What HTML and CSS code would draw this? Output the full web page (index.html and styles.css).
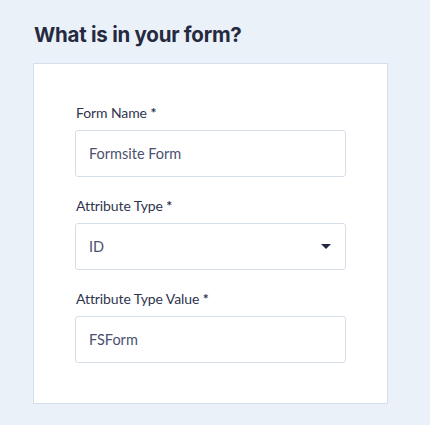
FILE: index.html
```html
<!DOCTYPE html>
<html lang="en">
<head>
<meta charset="utf-8">
<title>What is in your form?</title>
<link rel="stylesheet" href="styles.css">
</head>
<body>
<main class="page">
  <h1 class="title">What is in your form?</h1>
  <section class="card">
    <div class="field">
      <label class="label">Form Name <span class="req">*</span></label>
      <div class="input">Formsite Form</div>
    </div>
    <div class="field">
      <label class="label">Attribute Type <span class="req">*</span></label>
      <div class="input select">
        <span>ID</span>
        <svg class="caret" width="10" height="5" viewBox="0 0 10 5"><path d="M0 0H10L5 5Z" fill="#232740"/></svg>
      </div>
    </div>
    <div class="field">
      <label class="label">Attribute Type Value <span class="req">*</span></label>
      <div class="input">FSForm</div>
    </div>
  </section>
</main>
</body>
</html>
```
FILE: styles.css
```css
html, body {
  margin: 0;
  padding: 0;
  background: #eaf1f8;
}
body {
  font-family: Lato, "Liberation Sans", sans-serif;
  color: #2f3350;
}
.page {
  width: 355px;
  padding: 22px 0 0 33px;
}
.title {
  margin: 0 0 0 1px;
  font-family: Inter, "Liberation Sans", sans-serif;
  font-weight: 700;
  font-size: 20.5px;
  line-height: 26px;
  color: #252a40;
  letter-spacing: -0.25px;
}
.card {
  margin-top: 15px;
  background: #ffffff;
  border: 1px solid #d6dee9;
  padding: 40px 41px 40px 41px;
  display: flex;
  flex-direction: column;
  gap: 20px;
}
.field {
  display: flex;
  flex-direction: column;
  gap: 8px;
}
.label {
  font-size: 14px;
  line-height: 18px;
  color: #30354f;
  padding-left: 1px;
  letter-spacing: -0.1px;
}
.req {
  font-weight: 700;
}
.input {
  height: 45px;
  border: 1px solid #d6dee9;
  border-radius: 3px;
  padding: 0 13px;
  display: flex;
  align-items: center;
  font-size: 14.5px;
  color: #4b5170;
}
.select {
  justify-content: space-between;
}
.caret {
  margin-right: 1px;
}
```
